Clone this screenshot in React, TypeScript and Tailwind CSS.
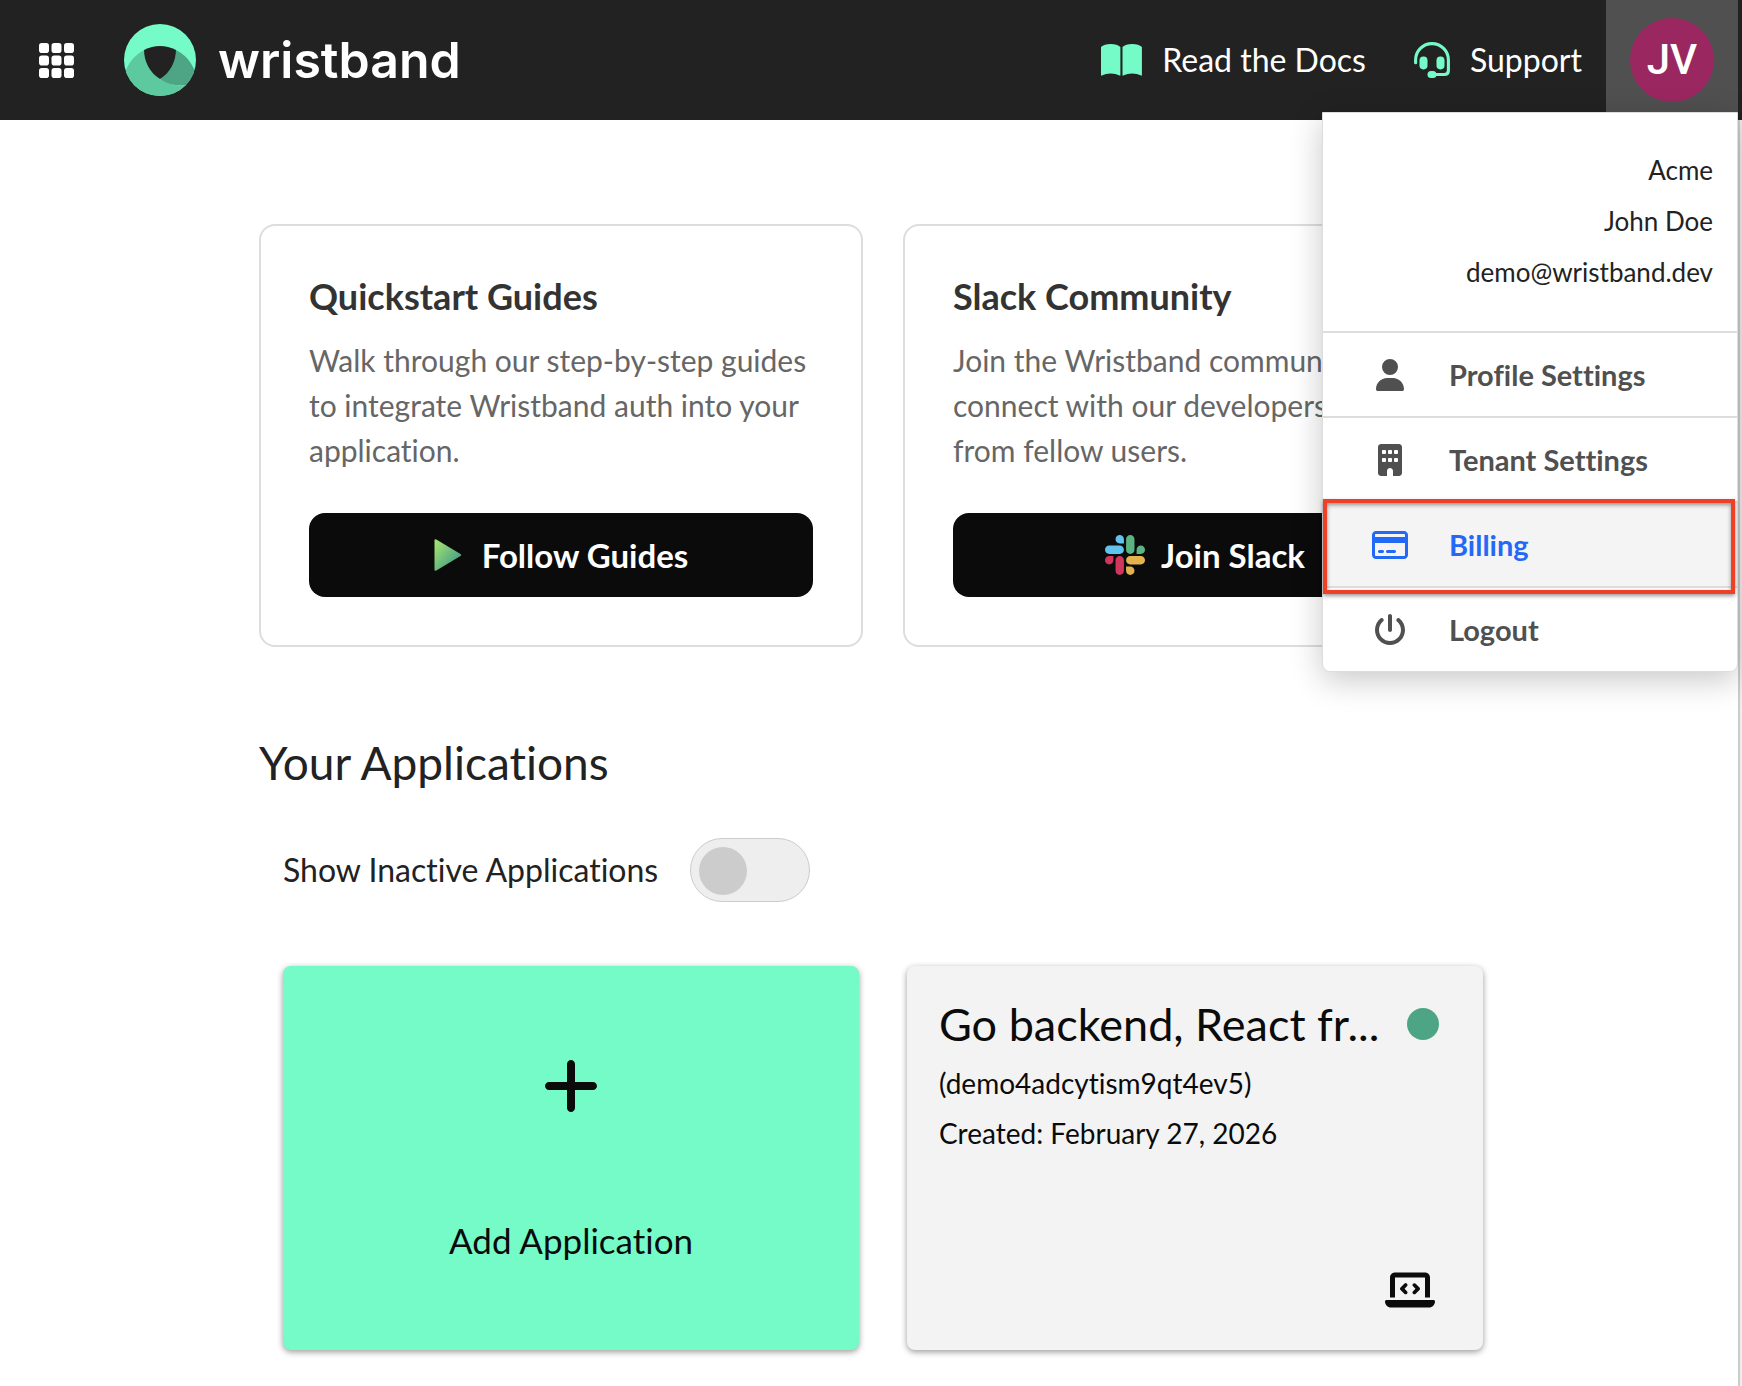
import { FaBuilding, FaLaptopCode, FaPlus, FaPowerOff, FaRegCreditCard, FaUser } from "react-icons/fa6";

const menuItems = [
  { label: "Profile Settings", icon: FaUser, active: false },
  { label: "Tenant Settings", icon: FaBuilding, active: false },
  { label: "Billing", icon: FaRegCreditCard, active: true },
  { label: "Logout", icon: FaPowerOff, active: false },
];

function AppsIcon() {
  return (
    <svg viewBox="0 0 35 35" className="h-[35px] w-[35px]" fill="#fff" aria-hidden="true">
      {[0, 12.5, 25].map((y) =>
        [0, 12.5, 25].map((x) => <rect key={`${x}-${y}`} x={x} y={y} width="10" height="10" rx="2.8" />),
      )}
    </svg>
  );
}

function WristbandMark() {
  return (
    <svg viewBox="0 0 72 72" className="h-[72px] w-[72px]" aria-hidden="true">
      <defs>
        <clipPath id="mark-clip">
          <circle cx="36" cy="36" r="36" />
        </clipPath>
      </defs>
      <g clipPath="url(#mark-clip)">
        <rect width="72" height="72" fill="#75fbc8" />
        <path d="M52 26C62 31 67 38 71 47L72 61H54C46 61 41 59 36 55C46 49 52 38 52 26Z" fill="#4ea585" />
        <path d="M2 46C6 37 11 31 20 26C20 38 26 49 36 55C43 60 51 62 62 61L60 72H0Z" fill="#5dc99f" />
        <path d="M20 26Q36 18 52 26C52 38 46 49 36 55C26 49 20 38 20 26Z" fill="#222" />
      </g>
    </svg>
  );
}

function BookIcon() {
  return (
    <svg viewBox="0 0 41 32" className="h-8 w-[41px]" fill="#75fbc8" aria-hidden="true">
      <path d="M0 3C2 1 5.500 0 9.700 0S17.400 1 19.400 3V31.200Q19.400 31.900 18.600 31.500C16 30.200 13 29.500 9.700 29.500S3.500 30.200 .8 31.500Q0 31.900 0 31.200Z" />
      <path d="M21.500 3C23.500 1 27 0 31.200 0S38.900 1 40.900 3V31.200Q40.900 31.900 40.100 31.500C37.500 30.200 34.500 29.500 31.200 29.500S25 30.200 22.300 31.500Q21.500 31.900 21.500 31.200Z" />
    </svg>
  );
}

function HeadsetIcon() {
  return (
    <svg viewBox="0 0 36 36" className="h-9 w-9" fill="#75fbc8" aria-hidden="true">
      <path
        d="M1.600 20.700V18A16.400 16.400 0 0 1 34.400 18V28.500Q34.400 32.500 30.400 32.500H19"
        fill="none"
        stroke="#75fbc8"
        strokeWidth="3.100"
        strokeLinecap="round"
      />
      <rect x="5.500" y="14.600" width="8" height="12.800" rx="3.800" />
      <rect x="22.500" y="14.600" width="8" height="12.800" rx="3.800" />
      <rect x="13.500" y="28.900" width="9" height="7.100" rx="3.550" />
    </svg>
  );
}

function PlayIcon() {
  return (
    <svg viewBox="0 0 27 32" className="h-8 w-7" aria-hidden="true">
      <defs>
        <linearGradient id="play-fill" x1="0" y1="0" x2="1" y2="1">
          <stop offset="0.1" stopColor="#a0e070" />
          <stop offset="0.75" stopColor="#4ea585" />
        </linearGradient>
      </defs>
      <path d="M0 1.4Q0 -.5 1.8 .5L26 15Q27.400 16 26 17L1.800 31.500Q0 32.500 0 30.600Z" fill="url(#play-fill)" />
    </svg>
  );
}

function SlackIcon() {
  return (
    <svg viewBox="0 0 122.8 122.8" className="h-10 w-10" aria-hidden="true">
      <path
        d="M25.8 77.6c0 7.100-5.800 12.900-12.900 12.900S0 84.700 0 77.600s5.800-12.900 12.900-12.900h12.900v12.900zm6.500 0c0-7.100 5.800-12.900 12.900-12.900s12.900 5.800 12.900 12.900v32.300c0 7.100-5.800 12.900-12.900 12.900s-12.900-5.800-12.900-12.900V77.600z"
        fill="#cf375d"
      />
      <path
        d="M45.200 25.800c-7.100 0-12.900-5.800-12.900-12.900S38.100 0 45.200 0s12.900 5.800 12.900 12.900v12.900H45.200zm0 6.500c7.100 0 12.900 5.800 12.900 12.900s-5.800 12.900-12.900 12.900H12.900C5.800 58.100 0 52.300 0 45.200s5.800-12.900 12.900-12.900h32.300z"
        fill="#60c3ee"
      />
      <path
        d="M97 45.200c0-7.100 5.800-12.900 12.900-12.900s12.900 5.800 12.900 12.900-5.800 12.900-12.900 12.900H97V45.200zm-6.500 0c0 7.100-5.800 12.900-12.900 12.900s-12.900-5.800-12.900-12.900V12.900C64.700 5.800 70.500 0 77.600 0s12.900 5.800 12.900 12.900v32.300z"
        fill="#5bb381"
      />
      <path
        d="M77.600 97c7.100 0 12.900 5.800 12.900 12.900s-5.800 12.900-12.900 12.900-12.900-5.800-12.900-12.900V97h12.900zm0-6.500c-7.100 0-12.900-5.800-12.900-12.900s5.800-12.900 12.900-12.900h32.300c7.100 0 12.900 5.800 12.900 12.900s-5.800 12.900-12.900 12.900H77.600z"
        fill="#e5b34c"
      />
    </svg>
  );
}

function Header() {
  return (
    <header className="flex h-[120px] items-center bg-[#222] pr-1 text-white">
      <button type="button" aria-label="Apps" className="ml-[39px]">
        <AppsIcon />
      </button>
      <a href="#home" className="ml-[50px] flex items-center gap-[22px]">
        <WristbandMark />
        <span className="font-['Inter'] text-[50px] leading-[56px] font-semibold">wristband</span>
      </a>
      <nav className="ml-auto flex h-full items-center">
        <a href="#docs" className="flex items-center gap-5 text-[32px] leading-10">
          <BookIcon />
          Read the Docs
        </a>
        <a href="#support" className="ml-12 flex items-center gap-5 text-[32px] leading-10">
          <HeadsetIcon />
          Support
        </a>
        <div className="relative ml-6 h-full">
          <button type="button" aria-expanded="true" className="flex h-full w-[132px] items-center justify-center bg-[#505050]">
            <span className="flex h-[84px] w-[84px] items-center justify-center rounded-full bg-[#9b2761] font-['Roboto'] text-[42px] leading-10 font-medium">
              JV
            </span>
          </button>
          <UserMenu />
        </div>
      </nav>
    </header>
  );
}

function UserMenu() {
  return (
    <div className="absolute top-28 right-0 z-10 w-[416px] rounded-b-lg border border-[#ddd] bg-white text-[#222] shadow-[0_8px_32px_rgba(0,0,0,0.22)]">
      <div className="pt-8 pr-6 pb-[33px] text-right text-[26px] leading-[51px]">
        <p>Acme</p>
        <p>John Doe</p>
        <p>demo@wristband.dev</p>
      </div>
      {menuItems.map(({ label, icon: Icon, active }) => (
        <button
          key={label}
          type="button"
          className={
            active
              ? "relative flex h-[85px] w-full items-center border-t-2 border-[#ddd] bg-[#f4f4f4] text-[29px] leading-9 font-bold text-[#2468f6]"
              : "flex h-[85px] w-full items-center border-t-2 border-[#ddd] text-[29px] leading-9 font-bold text-[#505050]"
          }
        >
          <span className="flex w-[126px] justify-center pr-2 pl-4">
            <Icon className="h-8 w-9" />
          </span>
          <span>{label}</span>
          {active && (
            <span className="absolute -top-1 right-0.5 -bottom-2 left-0 border-4 border-[#ee4026] shadow-[0_2px_4px_rgba(0,0,0,0.4),inset_0_2px_4px_rgba(0,0,0,0.4)]" />
          )}
        </button>
      ))}
    </div>
  );
}

export default function App() {
  return (
    <div className="flex min-h-screen flex-col bg-[#eee] font-['Lato',sans-serif] text-[#222] [font-variant-ligatures:none]">
      <Header />
      <main className="mr-0.5 flex-1 border-r-2 border-[#ccc] bg-white pt-[104px] pr-[231px] pb-8 pl-[259px]">
        <section className="grid grid-cols-2 gap-10">
          <article className="rounded-2xl border-2 border-[#ddd] p-12">
            <h2 className="text-[36px] leading-[44px] font-bold text-[#333]">Quickstart Guides</h2>
            <p className="mt-5 text-[30px] leading-[45px] text-[#666]">
              Walk through our step-by-step guides to integrate Wristband auth into your application.
            </p>
            <button
              type="button"
              className="mt-10 flex h-[84px] w-full items-center justify-center gap-5 rounded-2xl bg-[#0b0b0b] text-[33px] leading-10 font-bold text-white"
            >
              <PlayIcon />
              Follow Guides
            </button>
          </article>
          <article className="rounded-2xl border-2 border-[#ddd] p-12">
            <h2 className="text-[36px] leading-[44px] font-bold text-[#333]">Slack Community</h2>
            <p className="mt-5 text-[30px] leading-[45px] text-[#666]">
              Join the Wristband community to connect with our developers and learn from fellow users.
            </p>
            <button
              type="button"
              className="mt-10 flex h-[84px] w-full items-center justify-center gap-4 rounded-2xl bg-[#0b0b0b] text-[33px] leading-10 font-bold text-white"
            >
              <SlackIcon />
              Join Slack
            </button>
          </article>
        </section>

        <h1 className="mt-[88px] text-[46px] leading-[56px]">Your Applications</h1>

        <label className="mt-[47px] ml-6 flex w-fit items-center gap-8 text-[32px] leading-10">
          Show Inactive Applications
          <input
            type="checkbox"
            role="switch"
            className="h-16 w-[120px] appearance-none rounded-full border border-[#ccc] bg-[#eee] p-2 before:block before:h-12 before:w-12 before:rounded-full before:bg-[#ccc]"
          />
        </label>

        <section className="mt-16 grid grid-cols-2 gap-12 px-6">
          <button
            type="button"
            className="flex h-96 flex-col items-center justify-center gap-[100px] rounded-lg bg-[#75fbc8] text-[35px] leading-[44px] text-[#0b0b0b] shadow-[0_2px_6px_rgba(0,0,0,0.4)]"
          >
            <FaPlus size={64} />
            Add Application
          </button>
          <article className="flex h-96 flex-col rounded-lg bg-[#f3f3f3] px-8 pt-[30px] pb-10 text-[#0b0b0b] shadow-[0_2px_6px_rgba(0,0,0,0.4)]">
            <div className="flex items-center justify-between pr-3">
              <h2 className="text-[45px] leading-[56px]">Go backend, React fr...</h2>
              <span className="h-8 w-8 rounded-full bg-[#4ea585]" />
            </div>
            <p className="mt-1.5 text-[28px] leading-[50px]">(demo4adcytism9qt4ev5)</p>
            <p className="text-[28px] leading-[50px]">Created: February 27, 2026</p>
            <FaLaptopCode className="mt-auto mr-4 h-10 w-[50px] self-end" />
          </article>
        </section>
      </main>
    </div>
  );
}
